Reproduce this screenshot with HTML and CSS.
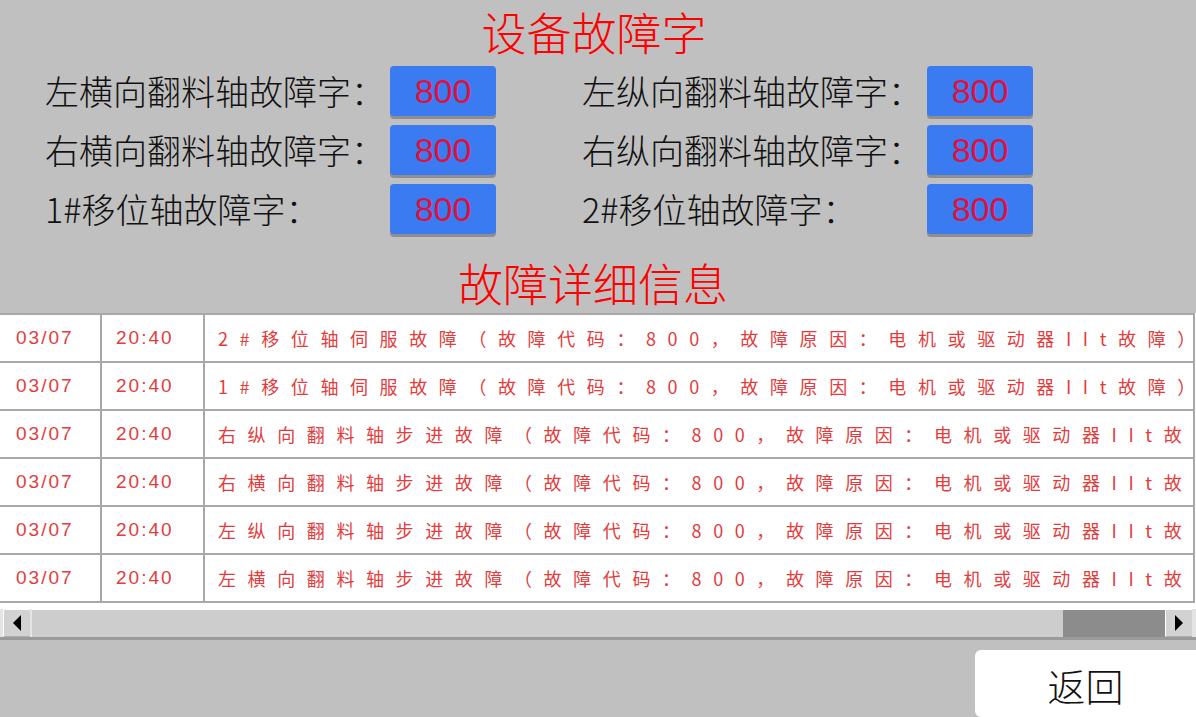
FILE: index.html
```html
<!DOCTYPE html>
<html lang="zh-CN">
<head>
<meta charset="utf-8">
<title>设备故障字</title>
<link rel="stylesheet" href="styles.css">
</head>
<body>
<div class="screen">
  <h1 class="title">设备故障字</h1>
  <div class="fields">
    <div class="field"><span class="label">左横向翻料轴故障字：</span><span class="value">800</span></div>
    <div class="field"><span class="label">左纵向翻料轴故障字：</span><span class="value">800</span></div>
    <div class="field"><span class="label">右横向翻料轴故障字：</span><span class="value">800</span></div>
    <div class="field"><span class="label">右纵向翻料轴故障字：</span><span class="value">800</span></div>
    <div class="field"><span class="label">1#移位轴故障字：</span><span class="value">800</span></div>
    <div class="field"><span class="label">2#移位轴故障字：</span><span class="value">800</span></div>
  </div>
  <h2 class="title title2">故障详细信息</h2>
  <div class="table">
    <div class="row"><div class="cell c1">03/07</div><div class="cell c2">20:40</div><div class="cell c3">2#移位轴伺服故障（故障代码：800，故障原因：电机或驱动器IIt故障）</div></div>
    <div class="row"><div class="cell c1">03/07</div><div class="cell c2">20:40</div><div class="cell c3">1#移位轴伺服故障（故障代码：800，故障原因：电机或驱动器IIt故障）</div></div>
    <div class="row"><div class="cell c1">03/07</div><div class="cell c2">20:40</div><div class="cell c3">右纵向翻料轴步进故障（故障代码：800，故障原因：电机或驱动器IIt故障）</div></div>
    <div class="row"><div class="cell c1">03/07</div><div class="cell c2">20:40</div><div class="cell c3">右横向翻料轴步进故障（故障代码：800，故障原因：电机或驱动器IIt故障）</div></div>
    <div class="row"><div class="cell c1">03/07</div><div class="cell c2">20:40</div><div class="cell c3">左纵向翻料轴步进故障（故障代码：800，故障原因：电机或驱动器IIt故障）</div></div>
    <div class="row last"><div class="cell c1">03/07</div><div class="cell c2">20:40</div><div class="cell c3">左横向翻料轴步进故障（故障代码：800，故障原因：电机或驱动器IIt故障）</div></div>
    <div class="scrollbar">
      <div class="sb-btn"><svg width="10" height="16" viewBox="0 0 10 16"><polygon points="9,0 9,16 1,8" fill="#000"/></svg></div>
      <div class="sb-track"><div class="sb-thumb"></div></div>
      <div class="sb-btn"><svg width="10" height="16" viewBox="0 0 10 16"><polygon points="1,0 1,16 9,8" fill="#000"/></svg></div>
    </div>
  </div>
  <div class="footer">
    <div class="back">返回</div>
  </div>
</div>
</body>
</html>
```

FILE: styles.css
```css
html, body {
  margin: 0;
  padding: 0;
}
body {
  background: #c0c0c0;
  font-family: "Noto Sans CJK SC", "Liberation Sans", sans-serif;
}
.screen {
  width: 1196px;
  height: 717px;
  overflow: hidden;
  display: flex;
  flex-direction: column;
}
.title {
  margin: 7px 0 0 0;
  height: 50px;
  line-height: 50px;
  font-size: 45px;
  font-weight: 300;
  color: #ff0000;
  text-align: center;
  padding-right: 8px;
}
.title2 {
  margin-top: 24px;
  padding-right: 10px;
}
.fields {
  margin-top: 9px;
  padding-left: 45px;
  display: grid;
  grid-template-columns: 537px 1fr;
  row-gap: 9px;
}
.field {
  display: flex;
  align-items: center;
  height: 50px;
}
.label {
  width: 345px;
  font-size: 34px;
  font-weight: 300;
  color: #111;
  line-height: 50px;
  white-space: nowrap;
}
.value {
  width: 106px;
  height: 50px;
  background: #3a7bf2;
  border-radius: 4px;
  box-shadow: 0 3px 0 #8e8e8e;
  color: #e0103a;
  font-family: "Liberation Sans Narrow", "Liberation Sans", sans-serif;
  font-size: 34px;
  line-height: 50px;
  text-align: center;
}
.table {
  margin-top: 5px;
  background: #fff;
  display: flex;
  flex-direction: column;
}
.row {
  display: grid;
  grid-template-columns: 102px 103px 1fr;
  height: 46px;
  border-top: 2px solid #a8a8a8;
  border-right: 2px solid #a8a8a8;
  margin-right: 1px;
}
.row.last {
  border-bottom: 2px solid #a8a8a8;
}
.cell {
  display: flex;
  align-items: center;
  color: #e23c3c;
  white-space: nowrap;
  overflow: hidden;
}
.c1, .c2 {
  border-right: 2px solid #a8a8a8;
  font-family: "Liberation Sans", sans-serif;
  font-size: 19px;
  letter-spacing: 2px;
}
.c1 {
  padding-left: 16px;
}
.c2 {
  padding-left: 14px;
}
.c3 {
  padding-left: 13px;
  font-size: 18px;
  letter-spacing: 11.6px;
}
.scrollbar {
  margin-top: 6px;
  height: 28px;
  display: flex;
  border-bottom: 3px solid #9a9a9a;
  background: #e4e4e4;
  padding-left: 3px;
  padding-right: 4px;
}
.sb-btn {
  width: 26px;
  height: 26px;
  background: #d2d2d2;
  border-top: 1px solid #fff;
  border-left: 1px solid #fff;
  border-bottom: 1px solid #b0b0b0;
  display: flex;
  align-items: center;
  justify-content: center;
}
.sb-track {
  flex: 1;
  background: #cdcdcd;
  border-top: 1px solid #fff;
  margin-left: 2px;
  display: flex;
  justify-content: flex-end;
}
.sb-thumb {
  width: 102px;
  background: #8c8c8c;
}
.footer {
  margin-top: 10px;
  display: flex;
  justify-content: flex-end;
}
.back {
  width: 221px;
  height: 67px;
  background: #fff;
  border-radius: 6px 0 0 6px;
  font-size: 38px;
  font-weight: 300;
  color: #111;
  display: flex;
  align-items: center;
  justify-content: center;
  box-sizing: border-box;
  padding-top: 2px;
}
```
